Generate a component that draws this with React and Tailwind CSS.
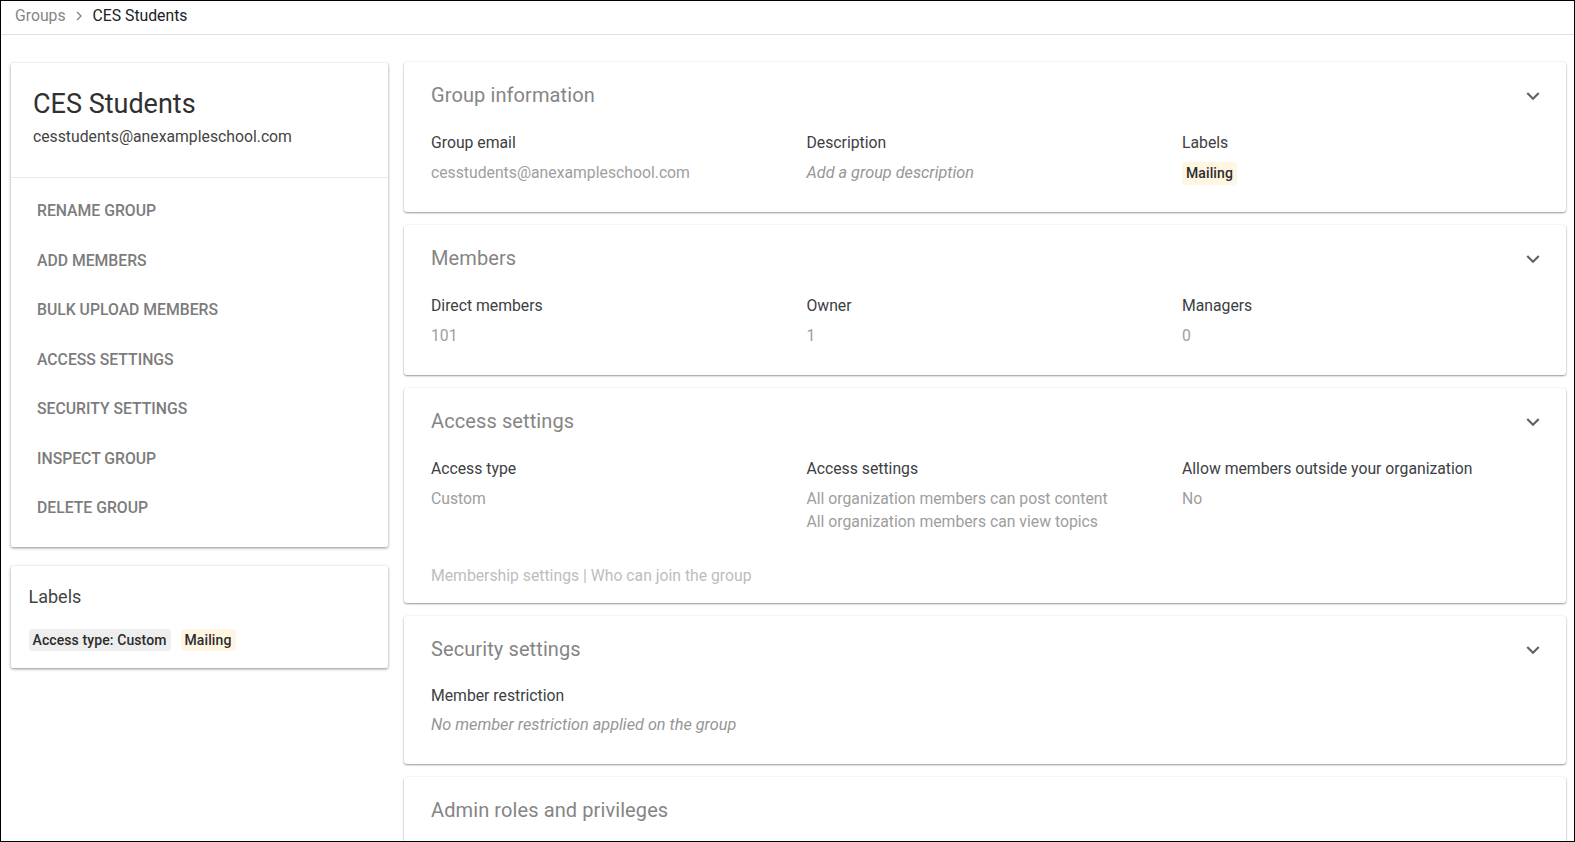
import React from "react";

const Chevron = () => (
  <svg width="26" height="26" viewBox="0 0 24 24" className="fill-[#5f6368] shrink-0 mt-[2px]">
    <path d="M7.41 8.59 12 13.17l4.59-4.58L18 10l-6 6-6-6z" />
  </svg>
);

const Card = ({ className = "", children }) => (
  <div className={`bg-white rounded-[2px] shadow-[0_1px_3px_rgba(0,0,0,0.45)] ${className}`}>{children}</div>
);

const Section = ({ title, h, chevron = true, children }) => (
  <div className={`bg-white rounded-[3px] shadow-[0_1px_2px_rgba(0,0,0,0.4),0_0_2px_rgba(0,0,0,0.08)] shrink-0 pl-[27px] pr-[20px] ${h}`}>
    <div className="flex items-center justify-between h-[66px]">
      <span className="text-[20px] tracking-[0.1px] text-[#858585]">{title}</span>
      {chevron && <Chevron />}
    </div>
    {children}
  </div>
);

const Field = ({ label, children }) => (
  <div>
    <div className="text-[15.75px] leading-[22px] text-[#3c4043]">{label}</div>
    <div className="mt-[7px] text-[15.75px] leading-[23px] text-[#9e9e9e]">{children}</div>
  </div>
);

const Grid = ({ children }) => (
  <div className="grid grid-cols-[375.5px_375.5px_1fr] pt-[4px]">{children}</div>
);

const Chip = ({ className, children }) => (
  <span className={`inline-block rounded-[4px] pl-[4px] pr-[4.5px] h-[22px] leading-[22px] text-[14px] font-medium text-[#2c2c2c] tracking-[0.1px] ${className}`}>{children}</span>
);

const actions = [
  "RENAME GROUP",
  "ADD MEMBERS",
  "BULK UPLOAD MEMBERS",
  "ACCESS SETTINGS",
  "SECURITY SETTINGS",
  "INSPECT GROUP",
  "DELETE GROUP",
];

export default function App() {
  return (
    <div className="h-[842px] w-[1575px] overflow-hidden border border-black bg-white flex flex-col font-['Roboto',sans-serif]">
      <div className="h-[34px] shrink-0 border-b border-[#e0e0e0] flex items-center pl-[14px] text-[15.75px] pb-[4px]">
        <span className="text-[#858585]">Groups</span>
        <svg width="16" height="16" viewBox="0 0 16 16" className="ml-[5px] fill-none stroke-[#808080] stroke-[1.3]">
          <path d="M6 4l4 4-4 4" />
        </svg>
        <span className="ml-[6px] text-[#202124]">CES Students</span>
      </div>
      <div className="flex flex-1 min-h-0 pt-[27px] pl-[10px] pr-[8px] gap-[16px] overflow-hidden">
        <div className="w-[377px] shrink-0 flex flex-col gap-[19px] pt-[1px]">
          <Card className="h-[484px]">
            <div className="h-[115px] border-b border-[#e8eaed] pl-[22px] pt-[23px]">
              <div className="text-[27px] leading-[36px] text-[#303030]">CES Students</div>
              <div className="mt-[4px] text-[15.75px] leading-[22px] text-[#444444]">cesstudents@anexampleschool.com</div>
            </div>
            <div className="pt-[8.5px] pl-[26px]">
              {actions.map((a) => (
                <div key={a} className="h-[49.5px] flex items-center text-[15.75px] font-medium text-[#7c7c7c]">{a}</div>
              ))}
            </div>
          </Card>
          <Card className="h-[102px] pl-[17.5px] pt-[19px]">
            <div className="text-[18px] leading-[24px] text-[#444444]">Labels</div>
            <div className="mt-[20px] flex gap-[9.5px]">
              <Chip className="bg-[#eeeeee]">Access type: Custom</Chip>
              <Chip className="bg-[#fef5e3]">Mailing</Chip>
            </div>
          </Card>
        </div>
        <div className="flex-1 min-w-0 flex flex-col gap-[13px]">
          <Section title="Group information" h="h-[150px]">
            <Grid>
              <Field label="Group email">cesstudents@anexampleschool.com</Field>
              <Field label="Description"><i className="text-[16.25px] text-[#969696]">Add a group description</i></Field>
              <div>
                <div className="text-[15.75px] leading-[22px] text-[#3c4043]">Labels</div>
                <Chip className="mt-[8px] bg-[#fef5e3] h-[23px] leading-[23px]">Mailing</Chip>
              </div>
            </Grid>
          </Section>
          <Section title="Members" h="h-[150px]">
            <Grid>
              <Field label="Direct members">101</Field>
              <Field label="Owner">1</Field>
              <Field label="Managers">0</Field>
            </Grid>
          </Section>
          <Section title="Access settings" h="h-[215px]">
            <Grid>
              <Field label="Access type">Custom</Field>
              <Field label="Access settings">
                All organization members can post content
                <br />
                All organization members can view topics
              </Field>
              <Field label="Allow members outside your organization">No</Field>
            </Grid>
            <div className="mt-[32px] text-[15.75px] leading-[22px] text-[#bdbdbd]">Membership settings | Who can join the group</div>
          </Section>
          <Section title="Security settings" h="h-[148px]">
            <div className="text-[15.75px] leading-[22px] text-[#3c4043] mt-[3px]">Member restriction</div>
            <div className="mt-[7px] text-[16.25px] leading-[22px] italic text-[#969696]">No member restriction applied on the group</div>
          </Section>
          <Section title="Admin roles and privileges" h="h-[150px]" chevron={false} />
        </div>
      </div>
    </div>
  );
}
